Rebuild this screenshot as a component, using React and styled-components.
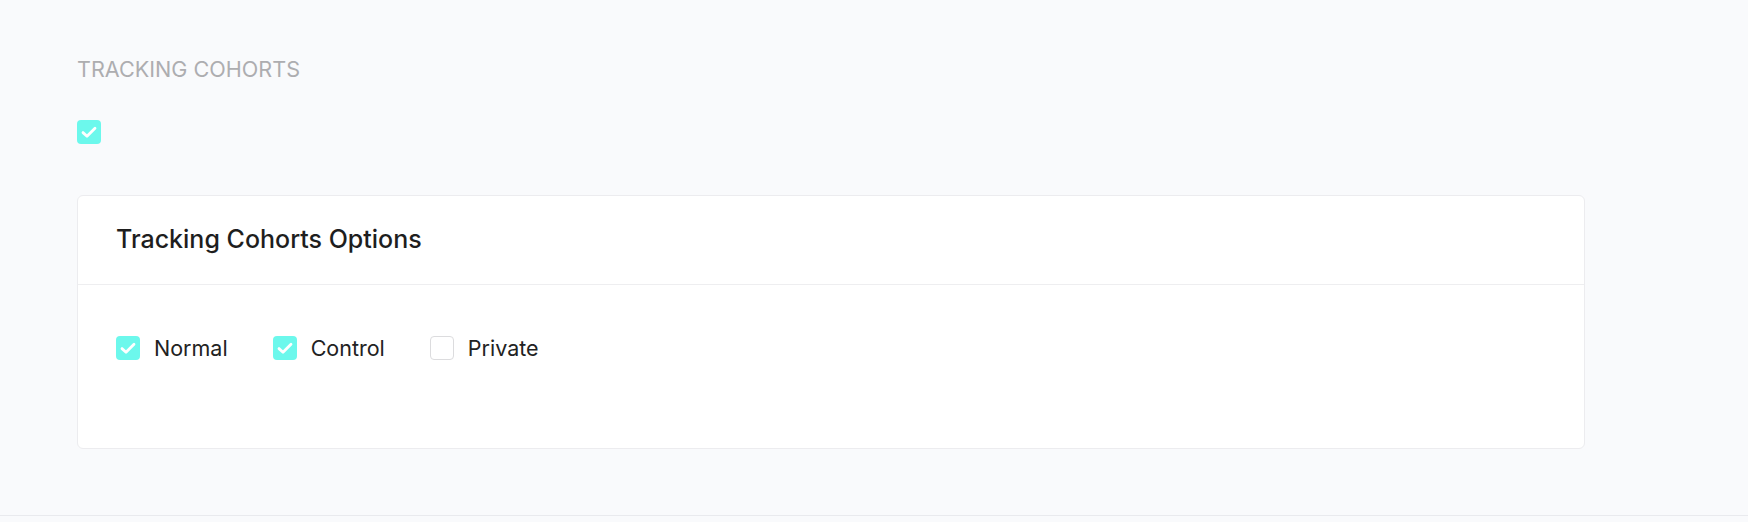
import React, { useState } from 'react'
import styled, { createGlobalStyle } from 'styled-components'

const GlobalStyle = createGlobalStyle`
    body {
        margin: 0;
        background: #f9fafc;
        font-family: Inter, "Noto Sans", sans-serif;
        color: #1f1f1f;
    }
`

const CheckIcon = () => (
    <svg width="24" height="24" viewBox="0 0 24 24" fill="none">
        <path d="M6 12.6 L10 16.2 L18 8.2" stroke="#ffffff" strokeWidth="2.8" strokeLinecap="round" strokeLinejoin="round" />
    </svg>
)

function Checkbox({ checked, onToggle }) {
    return (
        <Box checked={checked} onClick={onToggle} role="checkbox" aria-checked={checked}>
            {checked && <CheckIcon />}
        </Box>
    )
}

function App() {
    const [enabled, setEnabled] = useState(true)
    const [cohorts, setCohorts] = useState({ Normal: true, Control: true, Private: false })

    const toggle = (name) => setCohorts((c) => ({ ...c, [name]: !c[name] }))

    return (
        <PageStyled>
            <GlobalStyle />
            <SectionLabel>TRACKING COHORTS</SectionLabel>
            <TopToggle>
                <Checkbox checked={enabled} onToggle={() => setEnabled(!enabled)} />
            </TopToggle>
            <Card>
                <CardHeader>
                    <h2>Tracking Cohorts Options</h2>
                </CardHeader>
                <CardBody>
                    {Object.keys(cohorts).map((name) => (
                        <Option key={name} onClick={() => toggle(name)}>
                            <Checkbox checked={cohorts[name]} />
                            <span>{name}</span>
                        </Option>
                    ))}
                </CardBody>
            </Card>
        </PageStyled>
    )
}

const PageStyled = styled.div`
    box-sizing: border-box;
    height: 516px;
    padding: 57px 163px 0 77px;
    border-bottom: 1px solid #e9eaee;
`

const SectionLabel = styled.div`
    font-size: 21.6px;
    line-height: 24px;
    color: #adadb0;
`

const TopToggle = styled.div`
    display: flex;
    margin-top: 39px;
`

const Box = styled.div`
    box-sizing: border-box;
    width: 24px;
    height: 24px;
    border-radius: 4px;
    display: flex;
    align-items: center;
    justify-content: center;
    cursor: pointer;
    flex-shrink: 0;
    background: ${({ checked }) => (checked ? '#6cf8ec' : '#ffffff')};
    border: ${({ checked }) => (checked ? 'none' : '1.5px solid #dcdcde')};
`

const Card = styled.div`
    margin-top: 51px;
    background: #ffffff;
    border: 1px solid #ececef;
    border-radius: 6px;
`

const CardHeader = styled.div`
    padding: 29px 38px 31px;
    border-bottom: 1px solid #eeeef0;
    h2 {
        margin: 0;
        font-size: 25px;
        line-height: 28px;
        font-weight: 500;
        color: #1e1e1e;
    }
`

const CardBody = styled.div`
    display: flex;
    align-items: center;
    gap: 45px;
    padding: 51px 38px 88px;
`

const Option = styled.label`
    display: flex;
    align-items: center;
    gap: 14px;
    cursor: pointer;
    span {
        font-size: 21.5px;
        line-height: 24px;
        color: #222222;
    }
`

export default App
